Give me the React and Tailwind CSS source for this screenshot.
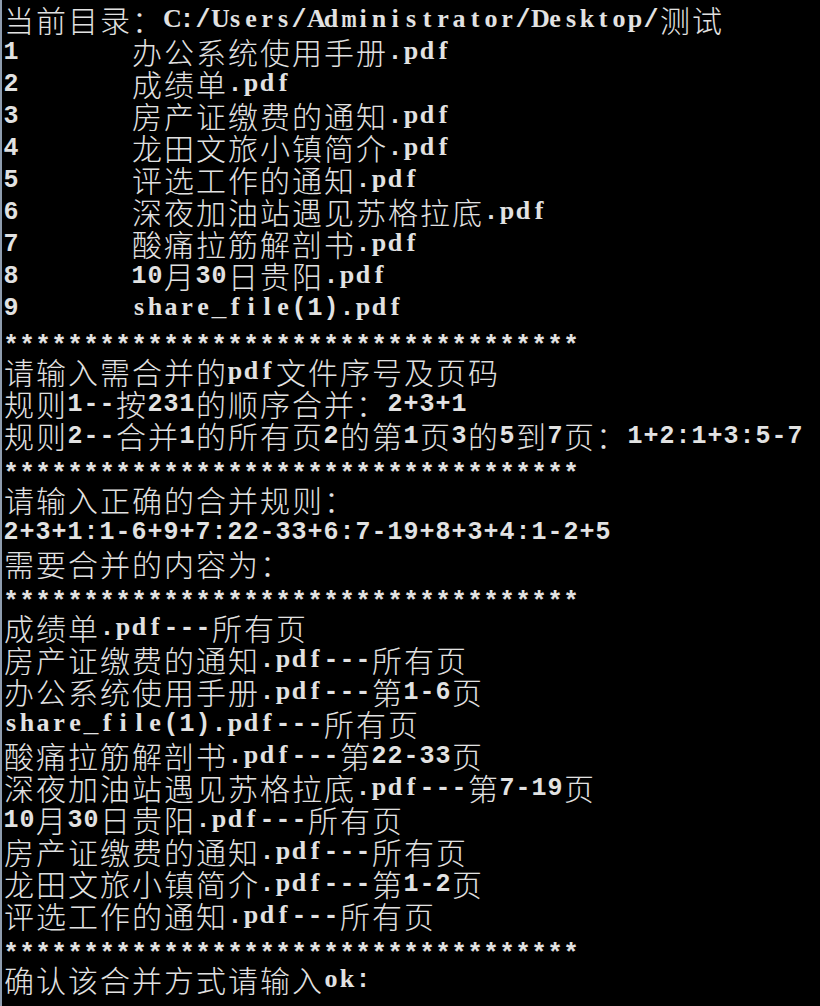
import React from "react";

const STARS = "************************************";

const LINES = [
  "当前目录：C:/Users/Administrator/Desktop/测试",
  "1\t办公系统使用手册.pdf",
  "2\t成绩单.pdf",
  "3\t房产证缴费的通知.pdf",
  "4\t龙田文旅小镇简介.pdf",
  "5\t评选工作的通知.pdf",
  "6\t深夜加油站遇见苏格拉底.pdf",
  "7\t酸痛拉筋解剖书.pdf",
  "8\t10月30日贵阳.pdf",
  "9\tshare_file(1).pdf",
  STARS,
  "请输入需合并的pdf文件序号及页码",
  "规则1--按231的顺序合并：2+3+1",
  "规则2--合并1的所有页2的第1页3的5到7页：1+2:1+3:5-7",
  STARS,
  "请输入正确的合并规则：",
  "2+3+1:1-6+9+7:22-33+6:7-19+8+3+4:1-2+5",
  "需要合并的内容为：",
  STARS,
  "成绩单.pdf---所有页",
  "房产证缴费的通知.pdf---所有页",
  "办公系统使用手册.pdf---第1-6页",
  "share_file(1).pdf---所有页",
  "酸痛拉筋解剖书.pdf---第22-33页",
  "深夜加油站遇见苏格拉底.pdf---第7-19页",
  "10月30日贵阳.pdf---所有页",
  "房产证缴费的通知.pdf---所有页",
  "龙田文旅小镇简介.pdf---第1-2页",
  "评选工作的通知.pdf---所有页",
  STARS,
  "确认该合并方式请输入ok:",
];

function cellsFor(line) {
  const cells = [];
  let col = 0;
  for (const ch of Array.from(line)) {
    if (ch === "\t") {
      const next = (Math.floor(col / 8) + 1) * 8;
      const n = next - col;
      for (let i = 0; i < n; i++) cells.push({ ch: " ", kind: "pad" });
      col = next;
    } else if (ch.codePointAt(0) > 0x2e80) {
      cells.push({ ch, kind: "wide" });
      col += 2;
    } else if (ch === "*") {
      cells.push({ ch, kind: "star" });
      col += 1;
    } else if ("mwMW".includes(ch)) {
      cells.push({ ch, kind: "wideletter" });
      col += 1;
    } else if (/[A-Za-z]/.test(ch)) {
      cells.push({ ch, kind: "letter" });
      col += 1;
    } else {
      cells.push({ ch, kind: "narrow" });
      col += 1;
    }
  }
  return cells;
}

function Cell({ c }) {
  if (c.kind === "wide") {
    return (
      <span className="block w-[32px] h-[32px] shrink-0 text-center text-[30px] leading-[35px] font-light font-['Noto_Sans_CJK_SC','Noto_Sans_CJK_JP',sans-serif] overflow-visible">
        {c.ch}
      </span>
    );
  }
  if (c.kind === "star") {
    return (
      <span className="block w-[16px] h-[32px] shrink-0 text-center text-[26px] leading-[48px] font-bold font-['Liberation_Mono',monospace] overflow-visible">
        {c.ch}
      </span>
    );
  }
  if (c.kind === "pad") {
    return <span className="block w-[16px] h-[32px] shrink-0" />;
  }
  if (c.kind === "letter") {
    return (
      <span className="block w-[16px] h-[32px] shrink-0 text-center text-[26px] leading-[33px] font-bold font-['Liberation_Serif',serif] overflow-visible">
        {c.ch}
      </span>
    );
  }
  if (c.kind === "wideletter") {
    return (
      <span className="block w-[16px] h-[32px] shrink-0 text-center text-[26px] leading-[33px] font-bold font-['Liberation_Serif',serif] overflow-visible scale-x-[0.72]">
        {c.ch}
      </span>
    );
  }
  return (
    <span className="block w-[16px] h-[32px] shrink-0 text-center text-[25px] leading-[37px] font-bold font-['Liberation_Mono',monospace] whitespace-pre overflow-visible">
      {c.ch}
    </span>
  );
}

export default function App() {
  return (
    <div className="w-[820px] h-[1006px] bg-black overflow-hidden border-l-2 border-[#8e9cae] pt-[2px] pl-[1px] text-[#e2e2e2]">
      {LINES.map((line, i) => (
        <div key={i} className="flex flex-row items-start h-[32px] whitespace-nowrap">
          {cellsFor(line).map((c, j) => (
            <Cell key={j} c={c} />
          ))}
        </div>
      ))}
    </div>
  );
}
